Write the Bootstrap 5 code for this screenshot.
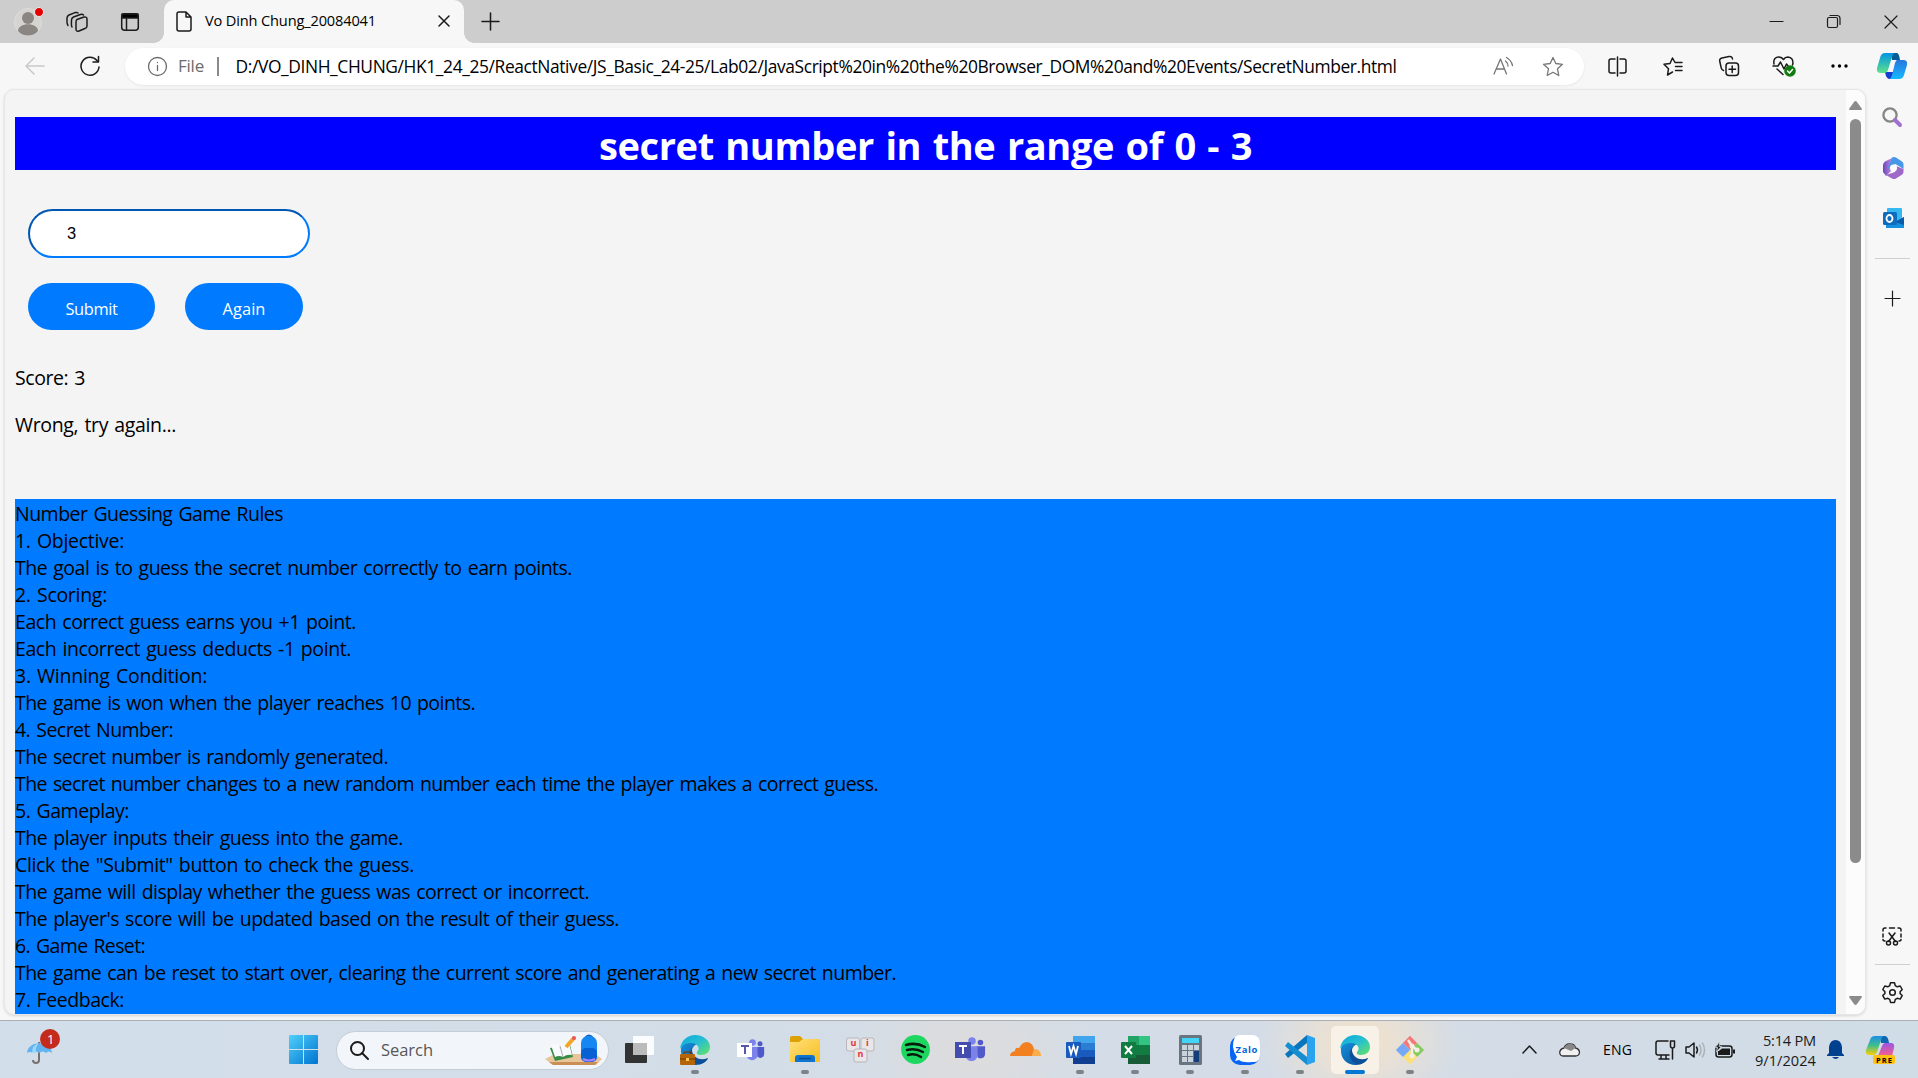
<!DOCTYPE html>
<html lang="en">
<head>
<meta charset="utf-8">
<title>Vo Dinh Chung_20084041</title>
<link href="https://cdn.jsdelivr.net/npm/bootstrap@5.3.0/dist/css/bootstrap.min.css" rel="stylesheet">
<style>
body{font-family:"Open Sans","Noto Sans",sans-serif;width:1918px;height:1078px;background:#f7f7f7;color:#000}
svg{display:block;flex:none;overflow:visible}
.ln{fill:none;stroke:#1b1b1b;stroke-width:1.5;stroke-linecap:round;stroke-linejoin:round}
[data-w]{white-space:nowrap}
.titlebar{height:43px;background:#cdcdcd}
.slot{display:flex;align-items:center;justify-content:center;flex:none}
.tab-active{width:300px;height:43px;background:#f7f7f7;border-radius:10px 10px 0 0;position:relative;font-size:14.6px;padding:0 12px 1px}
.tab-active::before,.tab-active::after{content:"";position:absolute;bottom:0;width:10px;height:10px}
.tab-active::before{left:-10px;background:radial-gradient(circle at 0 0,#cdcdcd 9.5px,#f7f7f7 10px)}
.tab-active::after{right:-10px;background:radial-gradient(circle at 100% 0,#cdcdcd 9.5px,#f7f7f7 10px)}
.toolbar{height:46px}
.omnibox{width:1462px;height:37px;background:#fff;border-radius:19px;box-shadow:0 1px 3px #0001;margin-left:7px;font-size:17.4px}
.omnibox .scheme{color:#6b6b6b;margin-left:11px;width:39px;font-size:17px}
.omnibox .rule{width:1.5px;height:19px;background:#8a8a8a}
.viewport{width:1862px;height:926px;margin-left:4px;border:1px solid #e6e6e6;border-radius:10px;background:#f4f4f4;box-shadow:0 1px 3px #0002}
.page{padding:27px 10px 0 10px;font-size:19.5px;line-height:27px;word-spacing:1.5px}
.page h1{height:53px;background:#00f;color:#fff;font-size:38px;line-height:56px;margin:0;font-weight:700;word-spacing:2px}
.page .guess{width:282px;height:49px;border-radius:25px;border:2px solid #007bff;border-top-color:#0056b3;border-left-color:#0056b3;padding:0 37px;font:16.5px "Liberation Sans",sans-serif;margin:39px 0 25px 13px;background:#fff;outline:0}
.page .pill{height:47px;border:0;border-radius:24px;background:#007bff;color:#fff;padding:3px 0 0;font-size:16.4px}
.rules{background:#007bff;height:516px;padding-top:1px;margin-top:61px}
.scroll{width:19px;background:#fcfcfc;padding-top:11px}
.scroll .thumb{width:11px;height:744px;border-radius:6px;background:#8b8b8b;margin-top:9px}
.side-rule{width:35px;height:1px;background:#cfcfcf}
.taskbar{height:58px;border-top:1px solid #a9afb5;background:radial-gradient(ellipse 100px 70px at 1360px 20px,#f1e2cd 10%,#f1e2cd00 100%),radial-gradient(ellipse 130px 90px at 970px 30px,#dedcdc,#dedcdc00),linear-gradient(90deg,#d2deea,#d4dce6 75%,#d0dce6)}
.finder{width:273px;height:39px;border-radius:20px;background:#f2f5f9;border:1px solid #c4cdd6;font-size:16.5px;color:#575757}
.app{width:55px;height:57px;position:relative}
.app.run::after,.app.front::after{content:"";position:absolute;bottom:4px;left:23.5px;width:8px;height:4px;border-radius:2px;background:#7d8287}
.app.front .tile{width:48px;height:48px;border-radius:5px;background:#f8f1e8}
.app.front::after{left:17.5px;width:20px;background:#0078d4}
.clock{width:68px;font-size:14.6px;line-height:20px;color:#1b1b1b}
</style>
<script src="https://cdn.jsdelivr.net/npm/bootstrap@5.3.0/dist/js/bootstrap.bundle.min.js"></script>
</head>
<body class="overflow-hidden">
<svg width="0" height="0" class="position-absolute">
<defs>
<linearGradient id="gTeal" x1="0" y1="0" x2="1" y2="1"><stop stop-color="#0aa8df"/><stop offset=".5" stop-color="#28c0d0"/><stop offset="1" stop-color="#67e45e"/></linearGradient>
<linearGradient id="gBlue" x1="0" y1="0" x2="1" y2="1"><stop stop-color="#1593df"/><stop offset="1" stop-color="#0b4a94"/></linearGradient>
<linearGradient id="gWin" x1="0" y1="0" x2="1" y2="1"><stop stop-color="#4fd0fa"/><stop offset="1" stop-color="#0073d0"/></linearGradient>
<linearGradient id="gCop" x1="0" y1="0" x2="0" y2="1"><stop stop-color="#0095e5"/><stop offset="1" stop-color="#5ee189"/></linearGradient>
<linearGradient id="gCop2" x1="0" y1="0" x2="0" y2="1"><stop stop-color="#2876dc"/><stop offset="1" stop-color="#15b8ff"/></linearGradient>
<linearGradient id="gRain" x1="0" y1="0" x2="0" y2="1"><stop stop-color="#1d8ee6"/><stop offset=".5" stop-color="#3fbf8c"/><stop offset="1" stop-color="#ffd000"/></linearGradient>
<linearGradient id="gPink" x1="0" y1="0" x2="0" y2="1"><stop stop-color="#9a55e8"/><stop offset="1" stop-color="#f95f86"/></linearGradient>
<linearGradient id="gFold" x1="0" y1="0" x2="1" y2="1"><stop stop-color="#ffe07a"/><stop offset="1" stop-color="#f8bd20"/></linearGradient>
<linearGradient id="gPur" x1="0" y1="0" x2="1" y2="0"><stop stop-color="#6a48b8"/><stop offset="1" stop-color="#c48ae6"/></linearGradient>
<symbol id="edge" viewBox="0 0 30 30"><path fill="url(#gBlue)" d="M1 13C0 23 6 30 16 30c6 0 10-3 12-7-8 5-17 0-16-8 1-4 4-6 7-6C10 4 3 7 1 13z"/><path fill="#0c4f98" d="M12 13c-5 6-1 16 8 16 4-1 7-3 8-6-9 4-17-2-16-10z"/><path fill="url(#gTeal)" d="M0 14C1 5 8 0 15 0c9 0 15 6 15 12 0 5-4 8-9 8-3 0-5-1-4-3 4-4 0-9-6-9C6 8 2 10 0 14z"/></symbol>
<symbol id="people" viewBox="0 0 30 27"><circle cx="24" cy="6" r="3" fill="#5059c9"/><path d="M19 10h10v8c0 5-5 6-8 4z" fill="#5059c9"/><circle cx="15" cy="4.500" r="4" fill="#7b83eb"/><path d="M8 10h13v9c0 9-13 9-13 0z" fill="#7b83eb"/></symbol>
</defs></svg>

<header class="titlebar d-flex align-items-center">
<div class="d-flex align-items-center" style="width:164px;padding-left:14px">
<svg width="28" height="28" viewBox="0 0 28 28"><circle cx="14" cy="14" r="13.500" fill="#d6d4d1" stroke="#dedddb"/><circle cx="14" cy="10" r="6" fill="#8b8682"/><path d="M4 23c0-9 20-9 20 0-5 6-15 6-20 0z" fill="#8b8682"/><circle cx="25" cy="4" r="4.500" fill="#e60000" stroke="#eee"/></svg>
<svg class="ln" style="margin-left:24px" width="22" height="20" viewBox="0 0 22 20"><path d="M11 7.500l7-2.500q3-.5 3 2v7q0 2-2 2.500l-6 2.500q-3 1-3-2v-7q0-2 1-2.500zM6 15c-1-1-.5-2-.5-7q0-2 2-3l7-2.500q2-.5 3 .500M2 13.500C.5 12 1 10 1 6q0-2 2-3l6-2.400q2-.5 3 .400"/></svg>
<svg class="ln" style="margin-left:33px" width="18" height="18" viewBox="0 0 18 18"><rect x=".7" y=".7" width="16.600" height="16.600" rx="3"/><path d="M1 1h16v4H1z" fill="#000"/><path d="M5.500 5v12"/></svg></div>
<div class="tab-active d-flex align-items-center"><svg class="ln" width="16" height="21" viewBox="0 0 16 21"><path d="M3 1h7l5 5v12q0 2-2 2H3q-2 0-2-2V3q0-2 2-2zM10 1v5h5"/></svg><span data-w="171" style="margin-left:13px">Vo Dinh Chung_20084041</span><svg class="ln ms-auto" style="margin-right:3px" width="10" height="10"><path d="M0 0l10 10M10 0L0 10"/></svg></div>
<svg class="ln" style="margin-left:18px" width="17" height="17"><path d="M8.500 0v17M0 8.500h17"/></svg>
<div class="ms-auto d-flex"><div class="slot" style="width:57px"><svg class="ln" width="13" height="13"><path d="M0 6.500h13" stroke-width="1.200"/></svg></div><div class="slot" style="width:57px"><svg class="ln" width="13" height="13"><path d="M3 .5h7q3 0 3 3v6" stroke-width="1.200"/><rect x=".5" y="2.500" width="10" height="10" rx="1.500" stroke-width="1.200"/></svg></div><div class="slot" style="width:56px;padding-left:1px"><svg class="ln" width="12" height="12"><path d="M0 0l12 12M12 0L0 12" stroke-width="1.200"/></svg></div></div>
</header>

<nav class="toolbar d-flex align-items-center">
<div class="slot" style="width:62px;padding-left:8px"><svg class="ln" width="20" height="18" viewBox="0 0 20 18"><path stroke="#c9c9c9" d="M19 9H1M9 1L1 9l8 8"/></svg></div>
<div class="slot" style="width:56px"><svg class="ln" width="20" height="20" viewBox="0 0 20 20"><path d="M19 11A9 9 0 1 1 17 4.500l1.500 1.500M18.500.5V6H13"/></svg></div>
<div class="omnibox d-flex align-items-center">
<svg class="ln" style="margin-left:23px" width="19" height="19" viewBox="0 0 19 19"><g stroke="#6b6b6b" stroke-width="1.300"><circle cx="9.500" cy="9.500" r="9"/><path d="M9.500 8.500v5M9.500 5.500v.1"/></g></svg>
<span class="scheme"><span data-w="26">File</span></span><span class="rule"></span>
<span data-w="1161" style="margin-left:17px">D:/VO_DINH_CHUNG/HK1_24_25/ReactNative/JS_Basic_24-25/Lab02/JavaScript%20in%20the%20Browser_DOM%20and%20Events/SecretNumber.html</span>
<div class="d-flex align-items-center ms-auto" style="gap:30px;padding-right:21px">
<svg class="ln" width="19" height="18" viewBox="0 0 19 18"><g stroke="#767676" stroke-width="1.300"><path d="M0 17L6.500 2l6 15M2.500 12h8M11.500 4q2.500 2 2.500 5M12.500.5q5 3 6 8"/></g></svg>
<svg class="ln" width="20" height="19" viewBox="0 0 20 19"><path stroke="#767676" stroke-width="1.300" d="M10 .5l2.800 6 6.700.8-5 4.500 1.300 6.700L10 15.200l-5.800 3.300 1.300-6.700-5-4.500 6.700-.8z"/></svg></div>
</div>
<div class="d-flex" style="margin-left:6px">
<div class="slot" style="width:55.500px"><svg class="ln" width="19" height="19" viewBox="0 0 19 19"><path d="M7 2H3q-2 0-2 2v10q0 2 2 2h4M12 2h4q2 0 2 2v10q0 2-2 2h-4M9.500 0v19"/></svg></div>
<div class="slot" style="width:55.500px"><svg class="ln" width="20" height="19" viewBox="0 0 20 19"><path d="M12 5.500L9.500 1 7 6.500l-6 .8 4.500 4.500L4.500 18l5-3M12.500 9.500H19M12.500 5.500H19M12.500 13.500H19"/></svg></div>
<div class="slot" style="width:55.500px"><svg class="ln" width="20" height="20" viewBox="0 0 20 20"><rect x="7" y="7" width="12.500" height="12.500" rx="3"/><path d="M13.200 10v6.500M10 13.200h6.500M4.500 14.500Q2.500 14 2 11L.7 5Q.3 2.700 3 2l7-1.400q3-.6 3.500 2.400"/></svg></div>
<div class="slot" style="width:55.500px"><svg class="ln" width="22" height="20" viewBox="0 0 22 20"><path d="M1 8C0 3 3 .8 6 1q3 .3 4.500 2.500Q12 1 15 1q5 .5 5 6l-.5 2M0 10h5l2.500-4 3.500 7 2.500-5 1.500 2M4 13l6 5.500"/><circle cx="17" cy="15" r="5.800" fill="#107c10" stroke="none"/><path stroke="#fff" d="M14.500 15l2 2 3-3.500"/></svg></div>
<div class="slot" style="width:54px"><svg width="17" height="4"><circle cx="2" cy="2" r="1.700"/><circle cx="8.500" cy="2" r="1.700"/><circle cx="15" cy="2" r="1.700"/></svg></div>
<div class="slot" style="width:52px"><svg width="30" height="27" viewBox="0 0 30 27"><path fill="#153fd0" d="M8 19h9l-3 7q-5 1-6-7z"/><path fill="#075e95" d="M14 0h6q2 0 3 7h-8z"/><path fill="url(#gCop)" d="M8 0h10q-2 0-3 4l-4 13q-1 3-4 3H4q-5 0-4-5L3 5q1-5 5-5z"/><path fill="url(#gCop2)" d="M20 7h6q5 0 4 5l-3 10q-1 4-5 4H12q2 0 3-4l3-12q1-3 2-3z"/></svg></div>
</div></nav>

<main class="d-flex" style="height:931px">
<section class="viewport d-flex overflow-hidden">
<div class="page flex-grow-1">
<h1 class="text-center"><span data-w="653">secret number in the range of 0 - 3</span></h1>
<input class="guess d-block" value="3">
<div class="d-flex" style="margin-left:13px;gap:30px"><button class="pill" style="width:127px"><span data-w="52">Submit</span></button><button class="pill" style="width:118px"><span data-w="43">Again</span></button></div>
<p class="mb-0" style="margin-top:34px"><span data-w="70">Score: 3</span></p>
<p class="mb-0" style="margin-top:20px"><span data-w="161">Wrong, try again...</span></p>
<div class="rules text-start">
<div><span data-w="268">Number Guessing Game Rules</span></div>
<div><span data-w="109">1. Objective:</span></div>
<div><span data-w="557">The goal is to guess the secret number correctly to earn points.</span></div>
<div><span data-w="92">2. Scoring:</span></div>
<div><span data-w="341">Each correct guess earns you +1 point.</span></div>
<div><span data-w="336">Each incorrect guess deducts -1 point.</span></div>
<div><span data-w="192">3. Winning Condition:</span></div>
<div><span data-w="460">The game is won when the player reaches 10 points.</span></div>
<div><span data-w="158">4. Secret Number:</span></div>
<div><span data-w="373">The secret number is randomly generated.</span></div>
<div><span data-w="863">The secret number changes to a new random number each time the player makes a correct guess.</span></div>
<div><span data-w="114">5. Gameplay:</span></div>
<div><span data-w="388">The player inputs their guess into the game.</span></div>
<div><span data-w="399">Click the "Submit" button to check the guess.</span></div>
<div><span data-w="574">The game will display whether the guess was correct or incorrect.</span></div>
<div><span data-w="604">The player's score will be updated based on the result of their guess.</span></div>
<div><span data-w="130">6. Game Reset:</span></div>
<div><span data-w="881">The game can be reset to start over, clearing the current score and generating a new secret number.</span></div>
<div><span data-w="109">7. Feedback:</span></div>
</div></div>
<div class="scroll d-flex flex-column align-items-center"><svg width="13" height="9"><path fill="#8b8b8b" d="M5 1q1.500-2 3 0l5 7q0 1-1 1H1q-1 0-1-1z"/></svg><div class="thumb"></div><svg class="mt-auto" style="margin-bottom:9px" width="13" height="9"><path fill="#8b8b8b" d="M5 8q1.500 2 3 0l5-7q0-1-1-1H1Q0 0 0 1z"/></svg></div>
</section>
<aside class="d-flex flex-column align-items-center flex-grow-1">
<svg style="margin-top:18px" width="20" height="20" viewBox="0 0 20 20"><circle cx="8" cy="8" r="6.600" fill="none" stroke="#858585" stroke-width="2.300"/><path d="M13 13l5 5" stroke="#a36fd0" stroke-width="4" stroke-linecap="round"/></svg>
<svg style="margin:30px 0 0 2px" width="21" height="22" viewBox="0 0 21 22"><path fill="url(#gPur)" d="M9 1L2 4.500Q0 6 0 8v7l3 4 5-5V9z"/><path fill="#4598e5" d="M9 .5q2-1 4 0l6 4q1.500 1 1.500 3V12l-8-5-4.500 2L4 13z"/><path fill="#9d68c8" d="M20.500 12v3q0 2-2 3L13 21.500q-2 1-4 0L3 18l9-3 1-6z"/><circle cx="10.500" cy="11" r="3.500" fill="#fff"/></svg>
<svg style="margin:29px 0 0 2px" width="21" height="20" viewBox="0 0 21 20"><rect x="4" width="15" height="17" rx="1" fill="#35b8f1"/><path fill="#1490df" d="M3 19V9l9 5 9-5v11H3z"/><path fill="#0a5ca8" d="M12 14l9-5v8z"/><rect y="4" width="14" height="13" rx="1.500" fill="#0f6cbd"/><ellipse cx="6.500" cy="10.500" rx="3" ry="3.500" fill="none" stroke="#fff" stroke-width="1.800"/></svg>
<div class="side-rule" style="margin-top:30px"></div>
<svg class="ln" style="margin-top:32px" width="15" height="15"><path d="M7.500 0v15M0 7.500h15" stroke-width="1.200"/></svg>
<svg class="ln mt-auto" width="20" height="19" viewBox="0 0 20 19"><path d="M1 4V3q0-2 2-2h1M7.500 1h5M16 1h1q2 0 2 2v1M1 7v3M19 7v3M1 12.500q0 1.500 2 1.500M19 12.500q0 1.500-2 1.500M7 6l6.500 8.500M13 6l-6.500 8.500"/><circle cx="6.500" cy="16" r="2"/><circle cx="13.500" cy="16" r="2"/></svg>
<div class="side-rule" style="margin-top:18px"></div>
<svg class="ln" style="margin:17px 0 17px" width="21" height="21" viewBox="0 0 21 21"><circle cx="10.500" cy="10.500" r="2.800"/><path d="M8.500.7h4l.8 3 1.900 1.100 3-.8 2 3.500-2.100 2.200v1.700l2.100 2.200-2 3.500-3-.8-1.900 1.100-.8 3h-4l-.8-3-1.900-1.100-3 .8-2-3.500 2.100-2.200V9.700L.8 7.500l2-3.500 3 .8 1.900-1.100z"/></svg>
</aside></main>

<footer class="taskbar d-flex align-items-center">
<div style="width:289px;padding-left:27px"><svg width="34" height="36" viewBox="0 0 34 36" style="margin-top:-6px"><path d="M12 13v18q0 3-3 3t-3-3" fill="none" stroke="#77716f" stroke-width="2"/><path fill="#62b3ef" d="M0 24C1 11 24 11 25 24q-3-3-6 0-3-3-7 0-3-3-6 0-3-2-6 0z"/><path fill="#9cd8fb" d="M5 24q0-8 7-10-4 4-3 10z"/><circle cx="23" cy="10" r="10" fill="#c42b1c"/><text x="20" y="15" font-size="13" fill="#fff">1</text></svg></div>
<svg width="29" height="29"><path fill="url(#gWin)" d="M0 1q0-1 1-1h13v14H0zM15 0h13q1 0 1 1v13H15zM0 15h14v14H1q-1 0-1-1zM15 15h14v13q0 1-1 1H15z"/></svg>
<div class="finder d-flex align-items-center" style="margin:1px 3.500px 0 18px">
<svg class="ln" style="margin-left:13px" width="19" height="19" viewBox="0 0 19 19"><circle cx="7.500" cy="7.500" r="6.500" stroke-width="2"/><path stroke-width="2" d="M12 12l6 6"/></svg><span style="margin-left:12px" data-w="52">Search</span>
<svg class="ms-auto" style="margin-right:6px" width="57" height="32" viewBox="0 0 57 32"><path fill="#e8c69a" d="M0 25l10-5h40l7 5-6 6H8z"/><path fill="#c98f55" d="M4 28h49l-3 3H8z"/><path fill="#388c45" d="M5 14l20-3 3 12-18 4z"/><path fill="#f8fafc" d="M6 11q4-2 9 1 4-4 9-3l3 12q-5-1-9 2-4-2-8 0z"/><path d="M15 12l3 11" stroke="#aaa"/><path d="M21 13l8-9" stroke="#f3a528" stroke-width="4"/><circle cx="29" cy="4" r="2" fill="#e65559"/><path fill="none" stroke="#125dbf" stroke-width="2" d="M40 4q4-5 8 0"/><rect x="36" y="2" width="16" height="26" rx="7" fill="#1687f0"/><rect x="36" y="14" width="16" height="14" rx="5" fill="#0761d3"/><path d="M38 25q6 3 12 0" stroke="#b080ff" stroke-width="2" fill="none"/></svg></div>
<div class="slot app"><svg width="30" height="28"><rect y="7" width="22" height="20" rx="1" fill="#333"/><rect x="8" width="21" height="19" rx="1" fill="#fff" opacity=".9"/><path d="M8 7h14v12H8z" fill="#bbb"/></svg></div>
<div class="slot app run"><svg width="30" height="30"><use href="#edge" width="30" height="30"/><rect y="19" width="15" height="11" rx="1" fill="#b66408"/><path d="M4 19v-2h7v2M0 24h15" stroke="#6d3700" fill="none"/><path d="M6 23h3v3H6z" fill="#ffc64a"/></svg></div>
<div class="slot app"><svg width="27" height="24"><use href="#people" x="3" width="25" height="24"/><path fill="#fff" d="M0 5h15v14H0z"/><path d="M4 8h8M8 8v8" stroke="#5558af" stroke-width="2"/></svg></div>
<div class="slot app run"><svg width="30" height="28"><path fill="#dea103" d="M0 2q0-2 2-2h8l3 3v5H0z"/><path fill="url(#gFold)" d="M0 6h9l4-3h17v22q0 1-1 1H1q-1 0-1-1z"/><path fill="#0f73cf" d="M5 26v-4q0-3 3-3h14q3 0 3 3v4z"/><path d="M9 22.500h12" stroke="#084c91" stroke-width="1.500"/></svg></div>
<div class="slot app"><svg width="29" height="26" font-size="9" font-weight="700" fill="#e5343b"><g fill="#e8e6e8" stroke="#b9b5ba"><rect x=".5" y="1" width="13" height="13" rx="2"/><rect x="15" y="1" width="13" height="13" rx="2"/><rect x="8" y="12" width="13" height="13" rx="2"/></g><text x="4.500" y="9">u</text><text x="20" y="9">i</text><text x="11.500" y="19.500">n</text></svg></div>
<div class="slot app"><svg width="29" height="29"><circle cx="14.500" cy="14.500" r="14.400" fill="#1ed760"/><path d="M5 10q10-3 19 2M6 15q9-2 16 2M7 20q7-2 13 2" fill="none" stroke="#071b0d" stroke-width="2.500" stroke-linecap="round"/></svg></div>
<div class="slot app"><svg width="30" height="27"><use href="#people" x="3" width="28" height="27"/><path fill="#454caf" d="M0 6h16v16H0z"/><path d="M4 10h8M8 10v8" stroke="#fff" stroke-width="2"/></svg></div>
<div class="slot app"><svg width="31" height="15"><path fill="#f9ad4d" d="M20 14c1-5 3-7 6-7 3 1 5 3 5 7z"/><path fill="#f38020" d="M0 14q0-4 5-5 0-4 4-3Q12 0 17 0q6 1 7 7l-2 6q0 1-1 1z"/></svg></div>
<div class="slot app run"><svg width="29" height="28"><path fill="#41a5ee" d="M7 0h22v7H7z"/><path fill="#2b7cd3" d="M7 7h22v7H7z"/><path fill="#185abd" d="M7 14h22v7H7z"/><path fill="#103f91" d="M7 21h22v7H7z"/><rect y="6" width="15" height="16" rx="1" fill="#185abd"/><path d="M3 10l2 8 2.500-8L10 18l2-8" fill="none" stroke="#fff" stroke-width="1.800"/></svg></div>
<div class="slot app run"><svg width="29" height="28"><path fill="#21a366" d="M7 0h11v9H7z"/><path fill="#33c481" d="M18 0h11v9H18z"/><path fill="#107c41" d="M7 9h22v10H7z"/><path fill="#185c37" d="M7 19h22v9H7z"/><rect y="6" width="15" height="16" rx="1" fill="#107c41"/><path d="M4 10l7 8M11 10l-7 8" stroke="#fff" stroke-width="2"/></svg></div>
<div class="slot app run"><svg width="23" height="30"><rect width="23" height="30" rx="1.500" fill="#687580"/><path fill="#43d5f5" d="M3 3h17v5H3z"/><path fill="#c9d3db" d="M3 10h5v5H3zM9 10h5v5H9zM15 10h5v5h-5zM3 16h5v5H3zM9 16h5v5H9zM3 22h5v5H3zM9 22h5v5H9z"/><path fill="#123f79" d="M15 16h5v11h-5z"/></svg></div>
<div class="slot app run"><svg width="30" height="30"><rect y="1" width="30" height="29" rx="10" fill="#0764f5"/><path fill="#fff" d="M10 0h12q8 0 8 9v11q0 8-8 7-9 1-13-2l-4 1 2-4Q0 12 5 2q2-2 5-2z"/><text x="5.500" y="17.500" font-size="9.500" font-weight="700" fill="#0764d8" textLength="22">Zalo</text></svg></div>
<div class="slot app run"><svg width="30" height="30" viewBox="0 0 30 30"><path fill="#0875bd" d="M22 0L0 19l3 4L22 8z"/><path fill="#168cd1" d="M22 30L0 11l3-4 19 15z"/><path fill="#29a3ef" d="M22 0l8 3v24l-8 3z"/></svg></div>
<div class="slot app front"><div class="tile slot"><svg width="30" height="30"><use href="#edge" width="30" height="30"/></svg></div></div>
<div class="slot app run"><svg width="30" height="30"><g transform="rotate(45 15 15)"><path fill="#f67777" d="M5 5h10v10H5z"/><path fill="#84cc60" d="M15 5h10v10H15z"/><path fill="#fde075" d="M15 15h10v10H15z"/><path fill="#75a9f6" d="M5 15h10v10H5z"/></g><path d="M13 5l4 6v12M17 11l5 4" stroke="#f5eee4" stroke-width="2.500" fill="none"/><circle cx="17" cy="11" r="2.500" fill="#f5eee4"/><circle cx="22" cy="15" r="2.500" fill="#f5eee4"/><circle cx="17" cy="21" r="2.500" fill="#f5eee4"/></svg></div>
<div class="d-flex align-items-center ms-auto" style="padding-right:22px">
<svg class="ln" width="13" height="7"><path d="M0 7l6.500-7L13 7"/></svg>
<svg style="margin-left:23px" width="21" height="14" viewBox="0 0 21 14"><path fill="#f0f0f0" stroke="#333" stroke-width="1.300" d="M4 13Q1 13 .7 9.500 1 6 5 5q2-5 6.500-4 4 0 5 4 4 1 4 4.500-.5 3.500-4 3.500z"/><path fill="#888" d="M5 5q2-4 6.500-4 4 0 5 4L12 8z"/></svg>
<span style="margin-left:23px;font-size:14px" data-w="29">ENG</span>
<svg class="ln" style="margin-left:23px" width="21" height="20" viewBox="0 0 21 20"><path d="M13 1H3Q1 1 1 3v10q0 2 2 2h11M6 15v4M11 15v4M4 19h10M15.500 1h4v5q0 2-2 2t-2-2zM17.500 8v11"/></svg>
<svg class="ln" style="margin-left:9px" width="20" height="16" viewBox="0 0 20 16"><path d="M1 5h3l5-4v14l-5-4H1zM11.500 5q2 3 0 6"/><path stroke="#aab2b9" d="M14.500 3q3 5 0 10M17.500 1q4 7 0 14"/></svg>
<svg class="ln" style="margin-left:10px" width="20" height="16" viewBox="0 0 20 16"><rect x="1" y="4" width="16" height="11" rx="2.500"/><path fill="#1b1b1b" stroke="none" d="M5 8l2-1.500h8V13H3V9h1zM18 7.500h2v4h-2z"/><path fill="#1b1b1b" stroke="#d3dce5" stroke-width=".8" d="M4.500-.5L.5 5.500h2L1.500 10l5-5.500h-2z"/></svg>
<div class="clock text-end" style="margin-left:13px"><div><span data-w="53">5:14 PM</span></div><div><span data-w="61">9/1/2024</span></div></div>
<svg style="margin-left:11px" width="17" height="19" viewBox="0 0 17 19"><path fill="#00418f" d="M2 13V7q1-7 6.500-7Q14 0 15 7v6l2 2v1H0v-1zM5 17h7q-3 4-7 0z"/></svg>
<svg style="margin-left:22px;margin-top:2px" width="30" height="29" viewBox="0 0 30 29"><path fill="#1167b1" d="M14 0h5q3 0 4 7h-8z"/><path fill="url(#gRain)" d="M9 0h9q-2 0-3 4l-4 12q-1 3-4 3H3q-4 0-3-5L4 4q1-4 5-4z"/><path fill="url(#gPink)" d="M19 7h6q4 0 3 5l-2 8H12l4-10q1-3 3-3z"/><rect x="7" y="19" width="22" height="9" rx="2" fill="#ffc20e"/><text x="10" y="26.500" font-size="7.500" font-weight="700" textLength="16">PRE</text></svg>
</div></footer>
<script>
/* Spread each label's letters so that the line has its designed width. */
document.querySelectorAll('[data-w]').forEach(el=>{
  el.classList.add('d-inline-block');
  const n=el.textContent.length, w=el.getBoundingClientRect().width;
  el.style.letterSpacing=((el.dataset.w-w)/n).toFixed(3)+'px';
});
</script>
</body>
</html>
